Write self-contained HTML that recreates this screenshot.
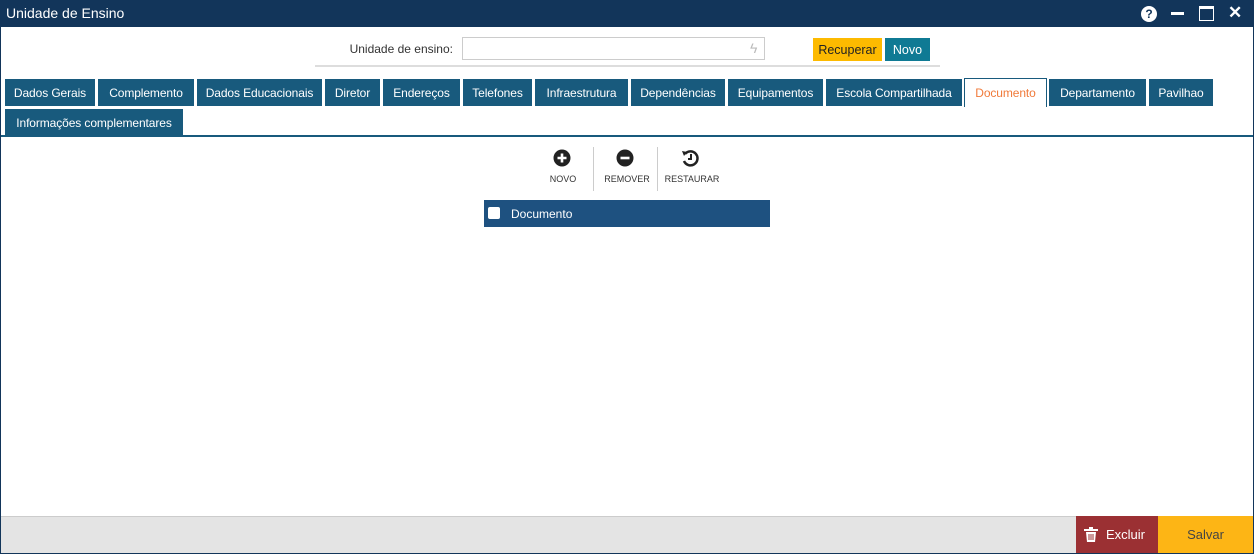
<!DOCTYPE html>
<html><head><meta charset="utf-8"><style>
*{box-sizing:border-box;margin:0;padding:0}
body{width:1254px;height:554px;position:relative;font-family:"Liberation Sans",sans-serif;background:#fff;overflow:hidden}
.a{position:absolute}
.win{left:0;top:0;width:1254px;height:554px;border:1px solid #12355a}
.title{left:0;top:0;width:1254px;height:27px;background:#12355a;color:#fff;font-size:14px;line-height:27px;padding-left:6px}
.tab{position:absolute;height:27px;background:#185a7d;color:#fff;font-size:12px;line-height:28px;text-align:center;white-space:nowrap;letter-spacing:-0.1px}
.act{background:#fff;color:#f07a3a;border:1px solid #185a7d;border-bottom:none;height:29px}
.lbl{font-size:9px;color:#333;text-align:center;width:70px}
</style></head><body>
<div class="a win"></div>
<div class="a title">Unidade de Ensino</div>
<div class="a" style="left:1141px;top:6px;width:16px;height:16px;border-radius:50%;background:#fff;color:#12355a;font-weight:bold;font-size:12px;text-align:center;line-height:16px">?</div>
<div class="a" style="left:1171px;top:12px;width:13px;height:3px;background:#fff"></div>
<div class="a" style="left:1199px;top:6px;width:15px;height:15px;border:1.5px solid #fff;border-top-width:3px"></div>
<div class="a" style="left:1228px;top:3px;color:#fff;font-weight:bold;font-size:17px">✕</div>

<div class="a" style="left:300px;top:42px;width:153px;text-align:right;font-size:12px;color:#333">Unidade de ensino:</div>
<div class="a" style="left:462px;top:37px;width:303px;height:23px;border:1px solid #ccc"></div>
<div class="a" style="left:750px;top:40px;color:#bbb;font-size:14px">ϟ</div>
<div class="a" style="left:315px;top:65px;width:625px;height:2px;background:#ddd"></div>
<div class="a" style="left:813px;top:38px;width:69px;height:23px;background:#fdba00;font-size:12.5px;line-height:24px;text-align:center;color:#222">Recuperar</div>
<div class="a" style="left:885px;top:38px;width:45px;height:23px;background:#0f7a94;font-size:12.5px;line-height:24px;text-align:center;color:#fff">Novo</div>

<div class="tab" style="left:5px;top:79px;width:90px">Dados Gerais</div>
<div class="tab" style="left:98px;top:79px;width:96px">Complemento</div>
<div class="tab" style="left:197px;top:79px;width:125px">Dados Educacionais</div>
<div class="tab" style="left:325px;top:79px;width:55px">Diretor</div>
<div class="tab" style="left:383px;top:79px;width:77px">Endereços</div>
<div class="tab" style="left:463px;top:79px;width:69px">Telefones</div>
<div class="tab" style="left:535px;top:79px;width:93px">Infraestrutura</div>
<div class="tab" style="left:631px;top:79px;width:94px">Dependências</div>
<div class="tab" style="left:728px;top:79px;width:95px">Equipamentos</div>
<div class="tab" style="left:826px;top:79px;width:136px">Escola Compartilhada</div>
<div class="tab act" style="left:964px;top:78px;width:83px">Documento</div>
<div class="tab" style="left:1049px;top:79px;width:97px">Departamento</div>
<div class="tab" style="left:1149px;top:79px;width:64px">Pavilhao</div>
<div class="tab" style="left:5px;top:109px;width:178px">Informações complementares</div>
<div class="a" style="left:1px;top:135px;width:1252px;height:2px;background:#185a7d"></div>

<svg class="a" style="left:553px;top:149px" width="18" height="18"><circle cx="9" cy="9" r="8.5" fill="#222"/><path d="M9 4.5v9M4.5 9h9" stroke="#fff" stroke-width="2.6"/></svg>
<svg class="a" style="left:616px;top:149px" width="18" height="18"><circle cx="9" cy="9" r="8.5" fill="#222"/><path d="M4.5 9h9" stroke="#fff" stroke-width="2.6"/></svg>
<svg class="a" style="left:681px;top:149px" width="18" height="18"><path d="M4 5A7 7 0 1 1 3 12" fill="none" stroke="#222" stroke-width="2.5"/><path d="M1 2l5 1-3 4z" fill="#222"/><path d="M10 5v5h-3" fill="none" stroke="#222" stroke-width="2"/></svg>
<div class="a lbl" style="left:528px;top:174px">NOVO</div>
<div class="a lbl" style="left:592px;top:174px">REMOVER</div>
<div class="a lbl" style="left:657px;top:174px">RESTAURAR</div>
<div class="a" style="left:593px;top:147px;width:1px;height:44px;background:#ccc"></div>
<div class="a" style="left:657px;top:147px;width:1px;height:44px;background:#ccc"></div>

<div class="a" style="left:484px;top:200px;width:286px;height:27px;background:#1e5180"></div>
<div class="a" style="left:488px;top:207px;width:12px;height:12px;background:#fff;border-radius:2px"></div>
<div class="a" style="left:511px;top:207px;color:#fff;font-size:12px">Documento</div>

<div class="a" style="left:1px;top:516px;width:1252px;height:37px;background:#e4e4e4;border-top:1px solid #ccc"></div>
<div class="a" style="left:1076px;top:516px;width:82px;height:37px;background:#9b3033;color:#fff;font-size:13px;line-height:38px;padding-left:30px">Excluir</div>
<svg class="a" style="left:1084px;top:527px" width="14" height="15"><rect x="0" y="2" width="14" height="2" fill="#fff"/><rect x="5" y="0" width="4" height="2" fill="#fff"/><path d="M2 5h10l-1 10H3z" fill="#fff"/><path d="M5 7v6M7 7v6M9 7v6" stroke="#9b3033" stroke-width="1"/></svg>
<div class="a" style="left:1158px;top:516px;width:95px;height:37px;background:#fdb515;color:#444;font-size:13px;line-height:38px;text-align:center">Salvar</div>
</body></html>
